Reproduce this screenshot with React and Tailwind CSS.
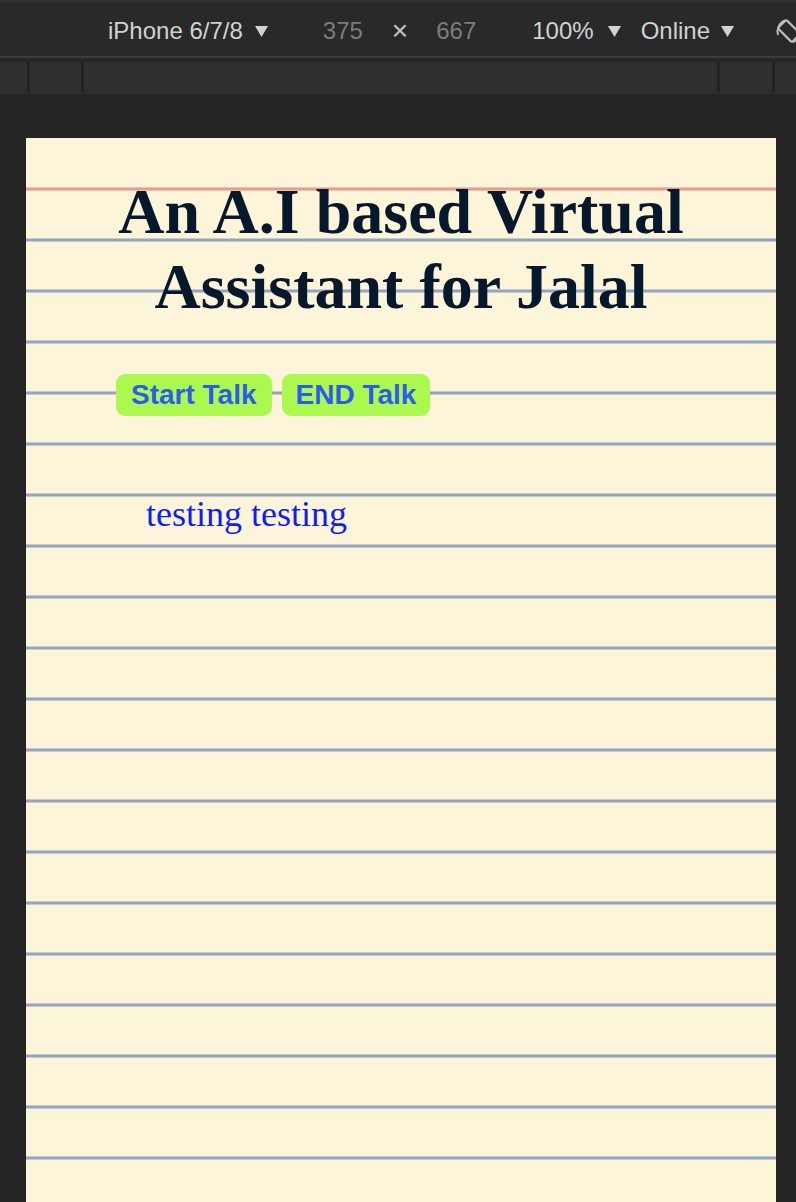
import React from "react";

function Caret() {
  return (
    <svg width="13" height="11" viewBox="0 0 13 11" className="shrink-0">
      <polygon points="0,0 13,0 6.5,11" fill="#d2d2d2" />
    </svg>
  );
}

function RotateIcon() {
  return (
    <svg width="30" height="30" viewBox="0 0 30 30" className="shrink-0">
      <path
        d="M4 19 A12 12 0 0 1 11 4.5"
        fill="none"
        stroke="#bdbdbd"
        strokeWidth="2"
      />
      <path
        d="M19 26 A12 12 0 0 0 26 11"
        fill="none"
        stroke="#bdbdbd"
        strokeWidth="2"
      />
      <rect
        x="9"
        y="5"
        width="12"
        height="20"
        rx="2"
        transform="rotate(-45 15 15)"
        fill="none"
        stroke="#bdbdbd"
        strokeWidth="2.2"
      />
    </svg>
  );
}

export default function App() {
  return (
    <div className="w-[796px] h-[1202px] bg-[#242424] overflow-hidden flex flex-col font-['Liberation_Sans',Arial,sans-serif]">
      {/* device toolbar */}
      <div className="h-[56px] shrink-0 bg-[#292929] border-t-2 border-[#303033] flex items-center pt-[4px] pl-[108px] text-[24px] text-[#d2d2d2] whitespace-nowrap">
        <span>iPhone 6/7/8</span>
        <span className="ml-[12px]">
          <Caret />
        </span>
        <span className="ml-[55px] text-[#7c7c7c]">375</span>
        <span className="ml-[29px] text-[28px] leading-none text-[#c4c4c4]">×</span>
        <span className="ml-[28px] text-[#7c7c7c]">667</span>
        <span className="ml-[56px]">100%</span>
        <span className="ml-[14px]">
          <Caret />
        </span>
        <span className="ml-[20px]">Online</span>
        <span className="ml-[11px]">
          <Caret />
        </span>
        <span className="ml-[40px]">
          <RotateIcon />
        </span>
      </div>
      <div className="h-[2px] shrink-0 bg-[#3b3b3b]"></div>
      <div className="h-[4px] shrink-0 bg-[#262626]"></div>
      {/* ruler strip */}
      <div className="h-[32px] shrink-0 bg-[#2f2f2f] flex">
        <div className="w-[27px]"></div>
        <div className="w-[3px] h-[30px] bg-[#232323]"></div>
        <div className="w-[51px]"></div>
        <div className="w-[3px] h-[30px] bg-[#232323]"></div>
        <div className="flex-1"></div>
        <div className="w-[3px] h-[30px] bg-[#232323]"></div>
        <div className="w-[52px]"></div>
        <div className="w-[3px] h-[30px] bg-[#232323]"></div>
        <div className="w-[21px]"></div>
      </div>
      <div className="h-[44px] shrink-0"></div>

      {/* lined paper page */}
      <div className="ml-[26px] w-[750px] flex-1 bg-[#fcf5d9] bg-no-repeat bg-[position:0_49px] bg-[image:linear-gradient(to_bottom,#f0c3b4_0,#f0c3b4_1px,#e79c8e_1px,#e79c8e_3px,#f0c3b4_3px,#f0c3b4_4px,transparent_4px),repeating-linear-gradient(to_bottom,#c4cccf_0,#c4cccf_1px,#93a5be_1px,#93a5be_3px,#c4cccf_3px,#c4cccf_4px,transparent_4px,transparent_51px)] font-['Liberation_Serif','Times_New_Roman',serif]">
        <h1 className="mt-[36px] px-4 text-center text-[64px] leading-[75px] font-bold text-[#07182c]">
          An A.I based Virtual Assistant for Jalal
        </h1>
        <div className="mt-[50px] pl-[90px] flex gap-[10px]">
          <button className="h-[42px] px-[15px] rounded-[9px] bg-[#abf84f] text-[#2b5cee] text-[28px] font-bold font-['Liberation_Sans',Arial,sans-serif]">
            Start Talk
          </button>
          <button className="h-[42px] px-[14px] rounded-[9px] bg-[#abf84f] text-[#2b5cee] text-[28px] font-bold font-['Liberation_Sans',Arial,sans-serif]">
            END Talk
          </button>
        </div>
        <p className="mt-[78px] pl-[120px] text-[36px] leading-[41px] text-[#0d1ff4]">
          testing testing
        </p>
      </div>
    </div>
  );
}
